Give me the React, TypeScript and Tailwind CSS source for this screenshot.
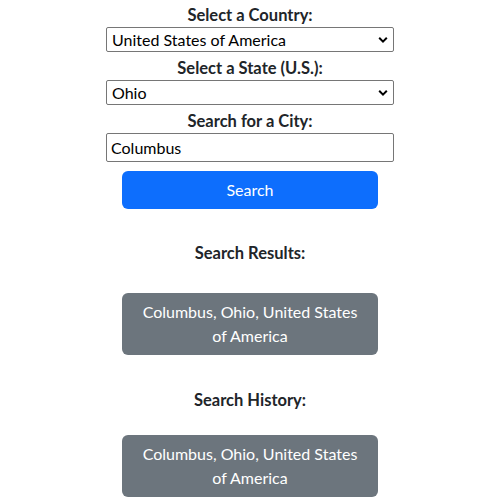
import { useState } from "react";

const COUNTRIES = ["United States of America", "Canada", "Mexico"];
const STATES = ["Ohio", "Texas", "California"];

function Chevron() {
  return (
    <svg className="pointer-events-none absolute right-[6px] top-1/2 -translate-y-1/2" width="10" height="7" viewBox="0 0 10 7">
      <path d="M1.2 1.3 L5 5.1 L8.8 1.3" fill="none" stroke="#000" strokeWidth="2" />
    </svg>
  );
}

export default function App() {
  const [country, setCountry] = useState(COUNTRIES[0]);
  const [state, setState] = useState(STATES[0]);
  const [city, setCity] = useState("Columbus");
  const result = "Columbus, Ohio, United States of America";

  return (
    <div className="w-[500px] min-h-[500px] bg-white text-[#212529] font-['Lato','Liberation_Sans',sans-serif] text-base">
      <div className="w-[288px] mx-auto pt-[3px] flex flex-col">
        <label className="text-center font-bold text-[16.5px] leading-6">Select a Country:</label>
        <div className="relative">
          <select
            value={country}
            onChange={e => setCountry(e.target.value)}
            className="block appearance-none w-full h-[25px] border border-[#767676] rounded-[2px] pl-[5px] text-black leading-5 bg-white"
          >
            {COUNTRIES.map(c => <option key={c}>{c}</option>)}
          </select>
          <Chevron />
        </div>

        <label className="text-center font-bold text-[16.5px] leading-6 mt-1">Select a State (U.S.):</label>
        <div className="relative">
          <select
            value={state}
            onChange={e => setState(e.target.value)}
            className="block appearance-none w-full h-[25px] border border-[#767676] rounded-[2px] pl-[5px] text-black leading-5 bg-white"
          >
            {STATES.map(s => <option key={s}>{s}</option>)}
          </select>
          <Chevron />
        </div>

        <label className="text-center font-bold text-[16.5px] leading-6 mt-1">Search for a City:</label>
        <input
          type="text"
          value={city}
          onChange={e => setCity(e.target.value)}
          className="block w-full h-[29px] border border-[#767676] rounded-[2px] px-[4px] text-black"
        />

        <button className="mt-[9px] mx-auto w-[256px] h-[38px] rounded-[6px] bg-[#0d6efd] text-white leading-6">
          Search
        </button>

        <h5 className="mt-8 text-center font-bold text-[16.5px] leading-6">Search Results:</h5>
        <div className="mt-7 mx-auto w-[256px] rounded-[6px] bg-[#6c757d] text-white text-center leading-6 py-[7px] px-3">
          {result}
        </div>

        <h5 className="mt-[33px] text-center font-bold text-[16.5px] leading-6">Search History:</h5>
        <div className="mt-[23px] mx-auto w-[256px] rounded-[6px] bg-[#6c757d] text-white text-center leading-6 py-[7px] px-3">
          {result}
        </div>
      </div>
    </div>
  );
}
